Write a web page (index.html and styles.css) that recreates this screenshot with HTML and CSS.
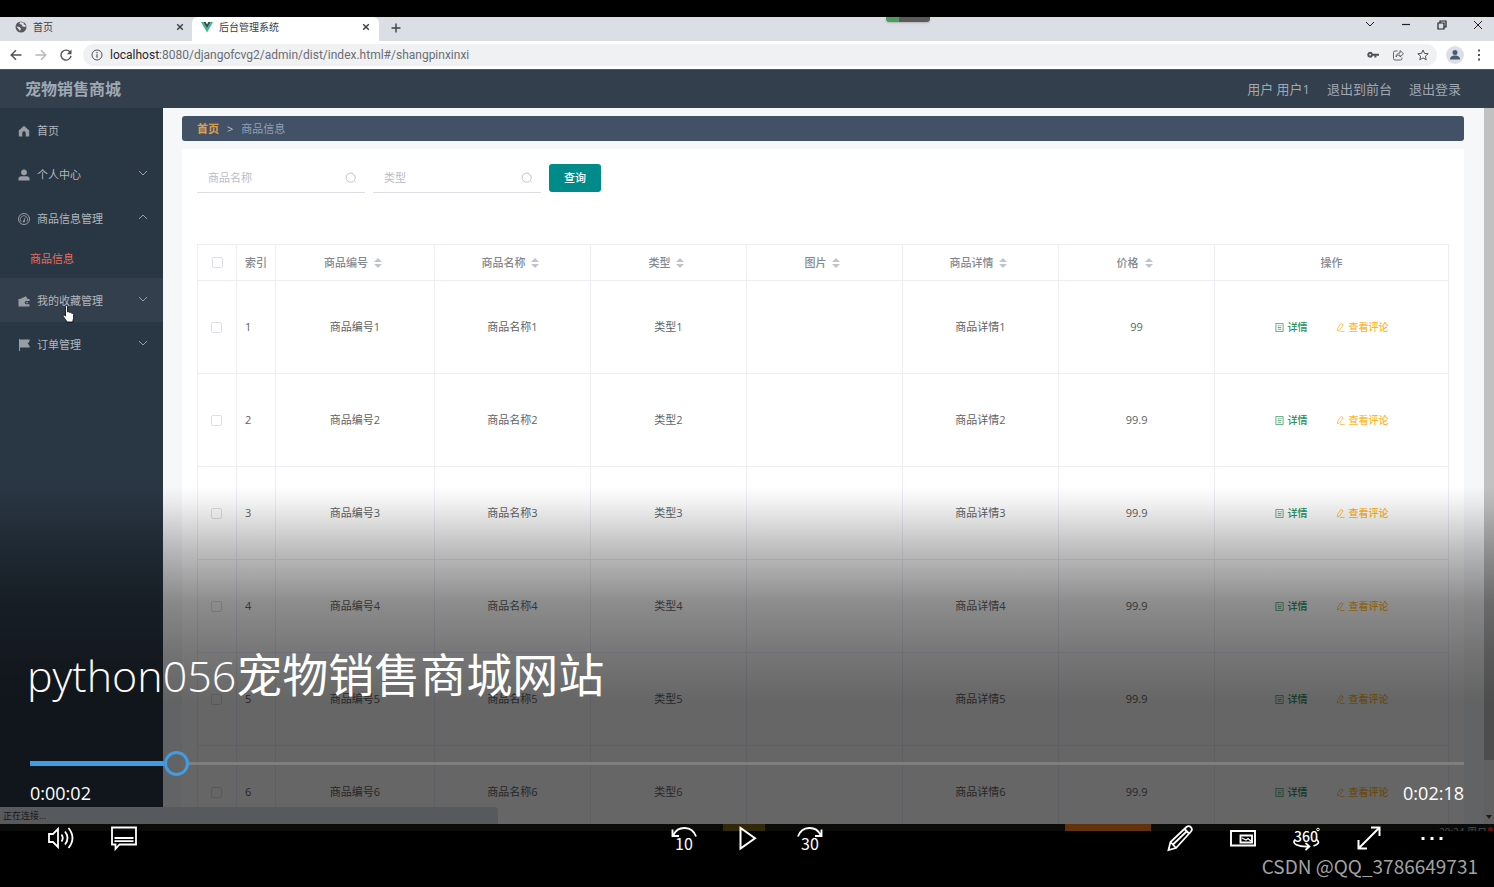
FILE: index.html
```html
<!DOCTYPE html>
<html lang="zh-CN">
<head>
<meta charset="utf-8">
<title>python056宠物销售商城网站</title>
<link rel="stylesheet" href="styles.css">
</head>
<body>
<svg class="defs" aria-hidden="true">
  <symbol id="i-close" viewBox="0 0 10 10"><path d="M1.5 1.5l7 7M8.5 1.5l-7 7" fill="none" stroke="currentColor" stroke-width="1.8"/></symbol>
  <symbol id="i-down" viewBox="0 0 10 6"><path d="M1 1l4 4 4-4" fill="none" stroke="currentColor"/></symbol>
  <symbol id="i-up" viewBox="0 0 10 6"><path d="M1 5l4-4 4 4" fill="none" stroke="currentColor"/></symbol>
  <symbol id="i-sort" viewBox="0 0 8 10"><path d="M4 0l4 4H0zM4 10l4-4H0z" fill="currentColor"/></symbol>
  <symbol id="i-search" viewBox="0 0 12 12"><path d="M8.6 9.2a4.6 4.6 0 1 1 .6-.6L11 10.6" fill="none" stroke="currentColor"/></symbol>
  <symbol id="i-doc" viewBox="0 0 10 10"><path d="M1 .5h8v9H1zM3 3h2M3 5h4M3 7h4M6 3h1.500" fill="none" stroke="currentColor" stroke-width=".8"/></symbol>
  <symbol id="i-edit" viewBox="0 0 10 10"><path d="M5.500 .6l2.500 1.500-4 5.700-2.500 1 .3-2.800zM4.500 9.500H9.500" fill="none" stroke="currentColor" stroke-width=".9"/></symbol>
</svg>
<main class="player">
  <div class="frame">
    <header class="tabs">
      <div class="tab">
        <svg class="fav" viewBox="0 0 12 12"><circle cx="6" cy="6" r="5.500" fill="#55585d"/><path d="M1.500 5.500l3 .5 1.500 1.500-1 2.500M5 1l-.5 2 2 .5 1 2 3 .5.3-1.500L8.500 3 9 1.800z" fill="#dcdee5"/></svg>
        <span class="tab-name">首页</span>
        <button class="tab-x" aria-label="关闭"><svg viewBox="0 0 10 10"><use href="#i-close"/></svg></button>
      </div>
      <div class="tab tab-on">
        <svg class="fav" viewBox="0 0 12 12"><path d="M0 1h2.400L6 7.200 9.600 1H12L6 11.400z" fill="#41b883"/><path d="M2.400 1h2.200L6 3.400 7.400 1h2.200L6 7.200z" fill="#35495e"/></svg>
        <span class="tab-name">后台管理系统</span>
        <button class="tab-x" aria-label="关闭"><svg viewBox="0 0 10 10"><use href="#i-close"/></svg></button>
      </div>
      <button class="tab-new" aria-label="新标签页"><svg viewBox="0 0 10 10"><path d="M5 .5v9M.5 5h9" stroke="currentColor" stroke-width="1.400"/></svg></button>
      <span class="widget"></span>
      <div class="win">
        <button aria-label="搜索标签页"><svg viewBox="0 0 10 10"><path d="M1 2l4 4 4-4" fill="none" stroke="currentColor"/></svg></button>
        <button aria-label="最小化"><svg viewBox="0 0 10 10"><path d="M1 4.500h8" stroke="currentColor" stroke-width="1.200"/></svg></button>
        <button aria-label="还原"><svg viewBox="0 0 10 10"><path d="M1 3h6v6H1zM3 3V1h6v6H7" fill="none" stroke="currentColor" stroke-width="1.200"/></svg></button>
        <button aria-label="关闭窗口"><svg viewBox="0 0 10 10"><path d="M1 1l8 8M9 1l-8 8" stroke="currentColor"/></svg></button>
      </div>
    </header>
    <div class="toolbar">
      <button aria-label="后退"><svg viewBox="0 0 12 12"><path d="M11.500 6H1.500M6 1.200L1.200 6 6 10.800" fill="none" stroke="currentColor" stroke-width="1.400"/></svg></button>
      <button class="off" aria-label="前进"><svg viewBox="0 0 12 12"><path d="M.5 6h10M6 1.200L10.800 6 6 10.800" fill="none" stroke="currentColor" stroke-width="1.400"/></svg></button>
      <button aria-label="刷新"><svg viewBox="0 0 12 12"><path d="M10.300 3.500A5 5 0 1 0 11 6.800" fill="none" stroke="currentColor" stroke-width="1.400"/><path d="M11.500.5v4.700H6.800z" fill="currentColor"/></svg></button>
      <div class="omni">
        <svg class="info" viewBox="0 0 12 12"><circle cx="6" cy="6" r="5" fill="none" stroke="currentColor"/><path d="M6 5.200v3.600M6 3v1.200" stroke="currentColor" stroke-width="1.200"/></svg>
        <span class="url"><b>localhost</b>:8080/djangofcvg2/admin/dist/index.html#/shangpinxinxi</span>
        <button aria-label="密码"><svg viewBox="0 0 12 12"><path d="M3.200 2.800a2.900 2.900 0 1 0 2.700 3.900h1.500v1.800h2V6.700H12V4.700H5.900a2.900 2.900 0 0 0-2.700-1.900zm0 2a.9.9 0 1 1 0 1.800.9.9 0 0 1 0-1.800z" fill="currentColor" fill-rule="evenodd"/></svg></button>
        <button aria-label="分享"><svg viewBox="0 0 12 12"><path d="M5.500 2H3Q1.500 2 1.500 3.500v6Q1.500 11 3 11h5.500Q10 11 10 9.500V8.500M4 8c.3-3 2-4 4-4V1.500L11.500 4.800 8 8V6C6 6 5 6.500 4 8z" fill="none" stroke="currentColor" stroke-width=".9"/></svg></button>
        <button aria-label="收藏"><svg viewBox="0 0 12 12"><path d="M6 1l1.500 3.400 3.700.3-2.800 2.500.8 3.600L6 8.900l-3.200 1.900.8-3.600L.8 4.700l3.700-.3z" fill="none" stroke="currentColor"/></svg></button>
      </div>
      <button class="me" aria-label="用户"><svg viewBox="0 0 18 18"><circle cx="9" cy="9" r="9" fill="#dbdfe6"/><circle cx="9" cy="6.500" r="2.500" fill="#4b5b73"/><path d="M4 13.500c0-3 2-4 5-4s5 1 5 4z" fill="#4b5b73"/></svg></button>
      <button aria-label="菜单"><svg viewBox="0 0 12 12"><path d="M5 .5h2v2H5zM5 5h2v2H5zM5 9.500h2v2H5z" fill="currentColor"/></svg></button>
    </div>
    <div class="topbar">
      <h1>宠物销售商城</h1>
      <nav><span>用户 用户1</span><a href="#">退出到前台</a><a href="#">退出登录</a></nav>
    </div>
    <div class="work">
      <nav class="side">
        <a class="item" href="#"><svg viewBox="0 0 12 12"><path d="M6 .8L.8 5.600V11.500h3.500V8a1.700 1.700 0 0 1 3.400 0v3.500h3.500V5.600z" fill="currentColor"/></svg>首页</a>
        <a class="item" href="#"><svg viewBox="0 0 12 12"><circle cx="6" cy="3.300" r="2.900" fill="currentColor"/><path d="M.5 11.500V9.500C.5 8 2 7.200 3.500 7.200h5C10 7.200 11.500 8 11.500 9.500v2z" fill="currentColor"/></svg>个人中心<svg class="chev" viewBox="0 0 10 6"><use href="#i-down"/></svg></a>
        <a class="item" href="#"><svg viewBox="0 0 12 12"><circle cx="6" cy="6" r="5.500" fill="none" stroke="currentColor"/><path d="M3.200 8.800A3.700 3.700 0 1 1 9 8.500" fill="none" stroke="currentColor" stroke-width=".8"/><path d="M7.500 3.500L6.800 8a1 1 0 1 1-1.300-.5z" fill="currentColor"/></svg>商品信息管理<svg class="chev" viewBox="0 0 10 6"><use href="#i-up"/></svg></a>
        <a class="sub" href="#">商品信息</a>
        <a class="item hover" href="#"><svg viewBox="0 0 12 12"><path d="M.5 4h1.500L8 1.200 9.500 4h2v2H8.300a1.600 1.600 0 0 0 0 3.200h3.200v2.300H.5z" fill="currentColor"/><circle cx="9" cy="7.600" r=".8" fill="currentColor"/></svg>我的收藏管理<svg class="chev" viewBox="0 0 10 6"><use href="#i-down"/></svg>
          <svg class="cursor" viewBox="0 0 13 18"><path d="M3.500 1.500c0-1.300 2-1.300 2 0V7c1-.6 2-.2 2.200.5.900-.4 1.900 0 2 .8 1-.2 1.900.2 1.900 1.200v3.500c0 1-.8 2-.8 4H5c-.5-1.500-2.500-3.500-3.700-5.500-.7-1.200.7-2 1.500-1.200l.7.9z" fill="#fff" stroke="#111" stroke-width=".9"/></svg></a>
        <a class="item" href="#"><svg viewBox="0 0 12 12"><path d="M1.500 0v12M2 1h9.500L9.500 4.500l2 3.500H2z" fill="currentColor" stroke="currentColor" stroke-width="1"/></svg>订单管理<svg class="chev" viewBox="0 0 10 6"><use href="#i-down"/></svg></a>
      </nav>
      <section class="content">
        <div class="crumb"><a href="#">首页</a><span class="gt">&gt;</span><span>商品信息</span></div>
        <div class="panel">
          <form class="search">
            <label class="field"><input type="text" placeholder="商品名称" aria-label="商品名称"><svg viewBox="0 0 12 12"><use href="#i-search"/></svg></label>
            <label class="field"><input type="text" placeholder="类型" aria-label="类型"><svg viewBox="0 0 12 12"><use href="#i-search"/></svg></label>
            <button type="button" class="query">查询</button>
          </form>
          <table class="grid">
            <colgroup><col class="c-s"><col class="c-s"><col class="c-no"><col><col><col><col><col><col class="c-op"></colgroup>
            <thead><tr>
              <th class="ck"><input type="checkbox" aria-label="全选"></th><th class="ix">索引</th>
              <th class="so">商品编号<svg class="sort" viewBox="0 0 8 10"><use href="#i-sort"/></svg></th>
              <th class="so">商品名称<svg class="sort" viewBox="0 0 8 10"><use href="#i-sort"/></svg></th>
              <th class="so">类型<svg class="sort" viewBox="0 0 8 10"><use href="#i-sort"/></svg></th>
              <th class="so">图片<svg class="sort" viewBox="0 0 8 10"><use href="#i-sort"/></svg></th>
              <th class="so">商品详情<svg class="sort" viewBox="0 0 8 10"><use href="#i-sort"/></svg></th>
              <th class="so">价格<svg class="sort" viewBox="0 0 8 10"><use href="#i-sort"/></svg></th>
              <th>操作</th>
            </tr></thead>
            <tbody>
              <tr><td class="ck"><input type="checkbox" aria-label="选择 1"></td><td class="ix">1</td><td>商品编号1</td><td>商品名称1</td><td>类型1</td><td></td><td>商品详情1</td><td>99</td><td><div class="ops"><button class="see"><svg viewBox="0 0 10 10"><use href="#i-doc"/></svg>详情</button><button class="cmt"><svg viewBox="0 0 10 10"><use href="#i-edit"/></svg>查看评论</button></div></td></tr>
              <tr><td class="ck"><input type="checkbox" aria-label="选择 2"></td><td class="ix">2</td><td>商品编号2</td><td>商品名称2</td><td>类型2</td><td></td><td>商品详情2</td><td>99.9</td><td><div class="ops"><button class="see"><svg viewBox="0 0 10 10"><use href="#i-doc"/></svg>详情</button><button class="cmt"><svg viewBox="0 0 10 10"><use href="#i-edit"/></svg>查看评论</button></div></td></tr>
              <tr><td class="ck"><input type="checkbox" aria-label="选择 3"></td><td class="ix">3</td><td>商品编号3</td><td>商品名称3</td><td>类型3</td><td></td><td>商品详情3</td><td>99.9</td><td><div class="ops"><button class="see"><svg viewBox="0 0 10 10"><use href="#i-doc"/></svg>详情</button><button class="cmt"><svg viewBox="0 0 10 10"><use href="#i-edit"/></svg>查看评论</button></div></td></tr>
              <tr><td class="ck"><input type="checkbox" aria-label="选择 4"></td><td class="ix">4</td><td>商品编号4</td><td>商品名称4</td><td>类型4</td><td></td><td>商品详情4</td><td>99.9</td><td><div class="ops"><button class="see"><svg viewBox="0 0 10 10"><use href="#i-doc"/></svg>详情</button><button class="cmt"><svg viewBox="0 0 10 10"><use href="#i-edit"/></svg>查看评论</button></div></td></tr>
              <tr><td class="ck"><input type="checkbox" aria-label="选择 5"></td><td class="ix">5</td><td>商品编号5</td><td>商品名称5</td><td>类型5</td><td></td><td>商品详情5</td><td>99.9</td><td><div class="ops"><button class="see"><svg viewBox="0 0 10 10"><use href="#i-doc"/></svg>详情</button><button class="cmt"><svg viewBox="0 0 10 10"><use href="#i-edit"/></svg>查看评论</button></div></td></tr>
              <tr><td class="ck"><input type="checkbox" aria-label="选择 6"></td><td class="ix">6</td><td>商品编号6</td><td>商品名称6</td><td>类型6</td><td></td><td>商品详情6</td><td>99.9</td><td><div class="ops"><button class="see"><svg viewBox="0 0 10 10"><use href="#i-doc"/></svg>详情</button><button class="cmt"><svg viewBox="0 0 10 10"><use href="#i-edit"/></svg>查看评论</button></div></td></tr>
            </tbody>
          </table>
        </div>
      </section>
      <div class="scroll"><span class="thumb"></span><svg viewBox="0 0 10 10"><path d="M2 3h6L5 7z" fill="#444"/></svg></div>
    </div>
    <div class="status">正在连接...</div>
  </div>
  <div class="taskbar"><span class="t-yellow"></span><span class="t-orange"></span><span class="clock">20:24 周日</span><span class="t-red"></span></div>

  <div class="overlay">
    <h2 class="title"><span>python056</span>宠物销售商城网站</h2>
    <input class="seek" type="range" min="0" max="1000" value="95" aria-label="播放进度">
    <div class="times"><span>0:00:02</span><span>0:02:18</span></div>
    <div class="controls">
      <div class="group left">
        <button aria-label="音量"><svg viewBox="0 0 28 28"><path d="M2 10h4l5-5v18l-5-5H2zM14.500 10.500q2.500 3.500 0 7M18 7.500q5 6.500 0 13M21.500 4q8 10 0 20" fill="none" stroke="#fff" stroke-width="1.800"/></svg></button>
        <button aria-label="字幕"><svg viewBox="0 0 28 28"><path d="M2 3.500h24v17H9.500L5.500 25v-4.500H2z M4.500 14h19M4.500 17.200h19" fill="none" stroke="#fff" stroke-width="1.800"/></svg></button>
      </div>
      <div class="group mid">
        <button aria-label="后退 10 秒"><svg viewBox="0 0 28 28"><path d="M26 12.500C22 1.500 8 1.500 3.500 11M2.500 5.500V12H9" fill="none" stroke="#fff" stroke-width="1.900"/><text x="14" y="26" text-anchor="middle">10</text></svg></button>
        <button aria-label="播放"><svg viewBox="0 0 28 28"><path d="M7.500 4v20.500L22 14.200z" fill="none" stroke="#fff" stroke-width="2"/></svg></button>
        <button aria-label="前进 30 秒"><svg viewBox="0 0 28 28"><path d="M2 12.500C6 1.500 20 1.500 24.500 11M25.500 5.500V12H19" fill="none" stroke="#fff" stroke-width="1.900"/><text x="14" y="26" text-anchor="middle">30</text></svg></button>
      </div>
      <div class="group right">
        <button aria-label="绘制"><svg viewBox="0 0 28 28"><path d="M2.500 26l2-8L20.500 3c3-2.500 7 1.500 4.500 4.500L10 24zM4.500 18l5.500 6M18.500 5l5 5M7 20.500L20.500 7.500" fill="none" stroke="#fff" stroke-width="1.800"/></svg></button>
        <button aria-label="小窗播放"><svg viewBox="0 0 28 28"><path d="M2 7h24v14.500H2zM11.500 11.500h11.500v7H11.500z" fill="none" stroke="#fff" stroke-width="1.900"/><path d="M13 14l4 2 2-1.500 3 2.500" fill="none" stroke="#fff" stroke-width="1.300"/></svg></button>
        <button aria-label="360 度"><svg viewBox="0 0 28 28"><text class="deg" x="14" y="18" text-anchor="middle">360</text><circle cx="26" cy="5.500" r="1.300" fill="none" stroke="#fff"/><path d="M3.500 15.500c-5 4 3 7.500 13 7M13.500 19l4 3.500-4 3.500M24.500 15.500c3.500 2.500 2 5-3 6.500" fill="none" stroke="#fff" stroke-width="1.700"/></svg></button>
        <button aria-label="全屏"><svg viewBox="0 0 28 28"><path d="M4 24L24 4M16 3.500h8.500V12M3.500 16v8.500H12" fill="none" stroke="#fff" stroke-width="2"/></svg></button>
        <button aria-label="更多"><svg viewBox="0 0 28 28"><path d="M3.500 13h3v3h-3zM12.500 13h3v3h-3zM21.500 13h3v3h-3z" fill="#fff"/></svg></button>
      </div>
    </div>
    <p class="mark">CSDN @QQ_3786649731</p>
  </div>
</main>
</body>
</html>
```
FILE: styles.css
```css
* { box-sizing: border-box; }
body { margin: 0; background: #000; font: 11px/16px "Open Sans", "Noto Sans CJK SC", sans-serif; color: #606266; }
button { margin: 0; padding: 0; border: 0; background: none; color: inherit; font: inherit; line-height: inherit; display: flex; align-items: center; }
a { color: inherit; text-decoration: none; }
svg { display: block; flex: none; }
.defs { display: none; }

.player { position: relative; height: 100vh; padding-top: 17px; display: flex; flex-direction: column; overflow: hidden; }
.frame { position: relative; flex: 1; min-height: 0; display: flex; flex-direction: column; overflow: hidden; background: #fff; }

.tabs { position: relative; flex: none; height: 24px; display: flex; background: #dcdee5; color: #3c4043; }
.tab { width: 192px; padding: 0 7px 4px 15px; display: flex; align-items: center; gap: 6px; font-size: 10px; }
.tab-on { width: 187px; padding-left: 9px; padding-right: 8px; background: #fff; border-radius: 6px 6px 0 0; }
.tab-name { flex: 1; }
.fav { width: 12px; height: 12px; }
.tab-x svg { width: 8px; height: 8px; }
.tab-x { padding: 1px; }
.tab-new { padding: 0 12px 3px; }
.tab-new svg { width: 10px; height: 10px; }
.widget { position: absolute; top: 0; left: 59.300%; width: 44px; height: 5px; border-radius: 0 0 3px 3px; background: linear-gradient(90deg, #4f9a5d 30%, #5b5b5b 30%); box-shadow: 0 1px 2px #9999; }
.win { margin-left: auto; padding: 0 11px 8px 0; display: flex; gap: 26px; color: #222; }
.win svg { width: 10px; height: 10px; }

.toolbar { flex: none; height: 28px; padding: 0 9px 1px 10px; display: flex; align-items: center; gap: 13px; color: #505357; }
.toolbar svg { width: 12px; height: 12px; }
.toolbar .off { color: #b4b6b9; }
.omni { flex: 1; height: 22px; margin-left: -2px; padding: 0 8px 0 8px; border-radius: 11px; background: #f0f1f3; display: flex; align-items: center; gap: 13px; }
.omni .info { margin-right: -6px; }
.url { flex: 1; font-family: Roboto, sans-serif; font-size: 12px; color: #6a6d72; white-space: nowrap; }
.url b { font-weight: 400; color: #25282c; }
.me { margin: 0 -4px; }
.toolbar .me svg { width: 18px; height: 18px; }

.topbar { flex: none; height: 39px; padding: 0 33px 0 25px; display: flex; align-items: center; justify-content: space-between; background: #343f4d; border-top: 1px solid #4d5968; color: #a0a8b3; }
.topbar h1 { margin: 0; font-size: 16px; line-height: 24px; font-weight: 700; }
.topbar nav { display: flex; gap: 17px; font-size: 13px; line-height: 20px; }

.work { flex: 1; min-height: 0; display: flex; }
.side { width: 163px; flex: none; background: #293643; color: #b3b8be; }
.item { position: relative; height: 44px; padding: 2px 15px 0 18px; display: flex; align-items: center; gap: 7px; }
.item > svg { width: 12px; height: 12px; color: #999ea5; }
.item .chev { width: 10px; height: 6px; margin: 0 0 4px auto; }
.hover { background: #343f4d; }
.item .cursor { position: absolute; left: 62px; top: 27px; width: 13px; height: 18px; }
.sub { height: 38px; padding-left: 30px; display: flex; align-items: center; color: #ee6b5c; }

.content { flex: 1; min-width: 0; padding: 8px 20px 0 19px; background: #f6f7f9; }
.crumb { height: 25px; padding: 0 15px; display: flex; align-items: center; gap: 8px; border-radius: 3px; background: #425166; color: #8fa0b8; }
.crumb a { color: #dba04f; font-weight: 700; }
.gt { color: #c0c4cc; }
.panel { margin-top: 8px; padding: 14px 15px; background: #fff; }
.search { display: flex; align-items: center; gap: 8px; margin-bottom: 51px; }
.field { width: 168px; height: 30px; padding: 1px 8px 0 11px; display: flex; align-items: center; border-bottom: 1px solid #dcdfe6; }
.field input { flex: 1; min-width: 0; padding: 0; border: 0; outline: 0; background: none; font: inherit; }
.field input::placeholder { color: #b9bdc6; }
.field svg { width: 12px; height: 12px; color: #c0c4cc; }
.query { height: 28px; padding: 0 15px; border-radius: 3px; background: #008b8b; color: #fff; font-weight: 500; }

.grid { width: 100%; table-layout: fixed; border-collapse: collapse; }
.c-s { width: 39px; }
.c-no { width: 12.700%; }
.c-op { width: 18.700%; }
.grid th, .grid td { border: 1px solid #ebeef5; padding: 0; text-align: center; }
.grid th { height: 36px; font-weight: 500; color: #85888e; }
.grid td { height: 93px; }
.grid .so { padding-right: 4px; }
.grid .ix { text-align: left; padding-left: 8px; }
.grid td.ck { padding-right: 2px; }
.ck input { appearance: none; display: block; width: 11px; height: 11px; margin: 0 auto; border: 1px solid #dcdfe6; border-radius: 2px; background: #fff; }
.sort { display: inline-block; width: 8px; height: 10px; margin-left: 6px; vertical-align: -1px; color: #c0c4cc; }
.ops { display: flex; justify-content: center; gap: 28px; font-size: 10px; }
.ops button { gap: 4px; font-weight: 500; }
.ops svg { width: 9px; height: 9px; }
.see { color: #2e9158; }
.cmt { color: #ffb52e; }

.scroll { width: 10px; flex: none; display: flex; flex-direction: column; justify-content: space-between; background: #f1f1f1; }
.scroll .thumb { height: 91%; background: #c1c1c1; }
.scroll svg { width: 10px; height: 10px; margin-bottom: 2px; }
.status { position: absolute; left: 0; bottom: 0; width: 33.300%; height: 17px; padding-left: 3px; border-radius: 0 3px 0 0; background: #dcdee5; color: #3c4043; font-size: 9px; line-height: 17px; }

.taskbar { flex: none; height: 7px; margin-bottom: 56px; display: flex; overflow: hidden; background: #1c1b18; }
.t-yellow { width: 42px; margin-left: 48.400%; background: #7a6712; }
.t-orange { width: 86px; margin-left: 20.100%; background: #f27c1d; }
.clock { margin: 1px 0 0 auto; font-size: 10px; line-height: 14px; color: #bbb; }
.t-red { width: 5px; height: 5px; margin: 3px 1px 0; border-radius: 50%; background: #f22; }

.overlay { position: absolute; left: 0; right: 0; bottom: 0; padding: 158px 30px 0; color: #fff;
  background: linear-gradient(180deg, #0000 0, #0000000d 16px, #00000040 62px, #00000073 117px, #00000088 165px, #00000099 215px); }
.title { margin: 0 0 45px -3px; font-size: 46px; line-height: 60px; font-weight: 400; }
.title span { font-size: 43px; font-weight: 300; }
.seek { appearance: none; display: block; width: 100%; height: 25px; margin: 0;
  --fill: calc((100% - 25px) * .095);
  background: linear-gradient(#429ce3, #429ce3) 0 50% / var(--fill) 5px no-repeat,
    linear-gradient(#7f7f7f, #7f7f7f) 100% 50% / calc(100% - var(--fill) - 25px) 3px no-repeat; }
.seek::-webkit-slider-thumb { appearance: none; width: 25px; height: 25px; border: 3px solid #429ce3; border-radius: 50%; background: none; }
.times { display: flex; justify-content: space-between; margin-top: 5px; font-size: 18px; line-height: 24px; }
.controls { display: grid; grid-template-columns: 1fr auto 1fr; margin-top: 19px; }
.group { display: flex; gap: 35px; }
.group svg { width: 28px; height: 28px; }
.left { padding-left: 17px; }
.right { justify-content: flex-end; padding-right: 18px; }
.group text { font-family: "Noto Sans CJK SC", sans-serif; font-size: 16px; fill: #fff; }
.group .deg { font-size: 14px; font-weight: 500; }
.mark { margin: 0 -14px 0 0; padding-bottom: 7px; text-align: right; font: 19px/28px "Noto Sans CJK SC", sans-serif; color: #a2a2a2; }
```
